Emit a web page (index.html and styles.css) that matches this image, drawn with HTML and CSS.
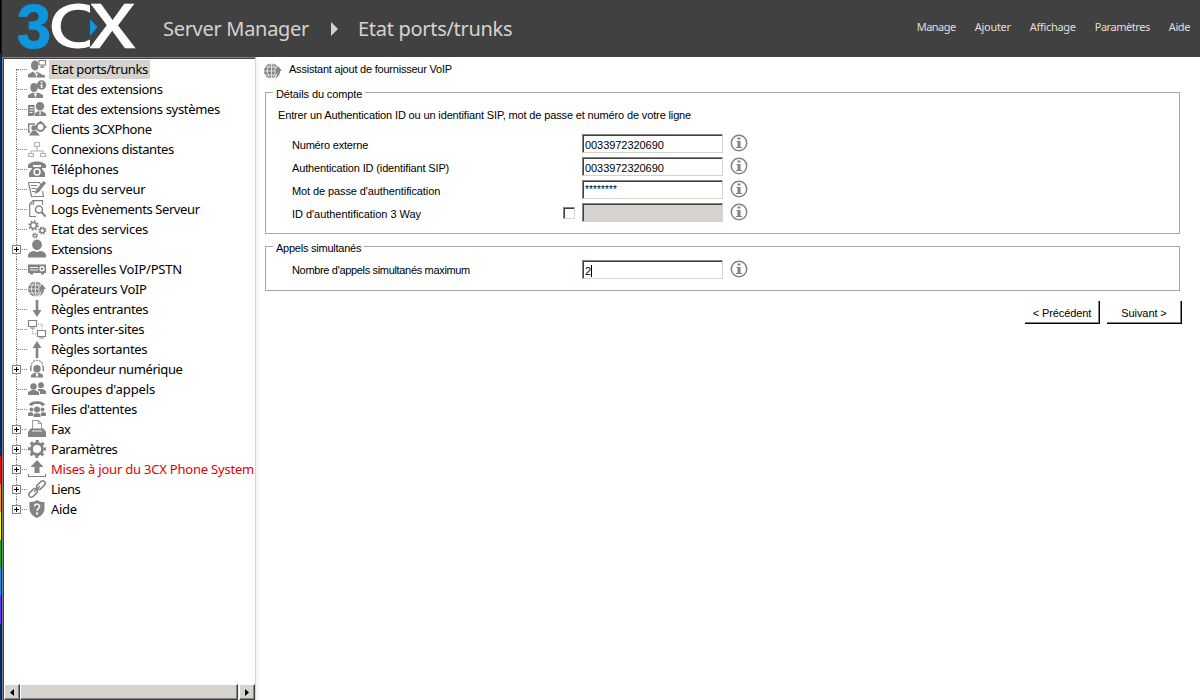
FILE: index.html
```html
<!DOCTYPE html>
<html lang="fr">
<head>
<meta charset="utf-8">
<title>3CX Server Manager</title>
<link rel="stylesheet" href="styles.css">
</head>
<body>
<div class="desktop-edge"><i class="red"></i><i class="orange"></i><i class="yellow"></i><i class="green"></i><i class="blue"></i><i class="violet"></i></div>
<div class="window">
<header class="header">
  <svg class="logo" width="120" height="48" viewBox="0 0 120 48">
    <clipPath id="c-edge"><path d="M30-5h42v60H30z"/></clipPath>
    <text class="logo-3" transform="translate(-1 45) scale(1 1.02)" textLength="34" lengthAdjust="spacingAndGlyphs">3</text>
    <g clip-path="url(#c-edge)"><text class="logo-c" transform="translate(30.500 45)" textLength="50" lengthAdjust="spacingAndGlyphs">C</text></g>
    <text class="logo-x" transform="translate(72 45)" textLength="45" lengthAdjust="spacingAndGlyphs">X</text>
    <path fill="#0e96dc" d="M72 16l7.500 8-7.500 9z"/>
  </svg>
  <span class="crumb crumb-a">Server Manager</span>
  <svg class="crumb-arrow" width="8" height="14"><path fill="#d6d3ce" d="M0 0l7 7-7 7z"/></svg>
  <span class="crumb crumb-b">Etat ports/trunks</span>
  <nav class="menu"><span class="m1">Manage</span><span class="m2">Ajouter</span><span class="m3">Affichage</span><span class="m4">Paramètres</span><span class="m5">Aide</span></nav>
</header>
<div class="body">
<aside class="sidebar">
<ul class="tree">
<li><svg class="ic" viewBox="0 0 18 18"><ellipse cx="7" cy="5.500" rx="4" ry="5"/><path d="M0 17.500v-3l5-3 2 2 2-2 5 3 3 1v2z"/><path class="w" d="M7 12.500l1.500 5 1.500-5-1.500 1z"/><path class="w" d="M10 0h8v7h-8z"/><path class="s" d="M11 .5h6.500v4.500H11zM14.300 5v2M12 7.200h4.500"/></svg><span class="t tight sel">Etat ports/trunks</span></li>
<li><svg class="ic" viewBox="0 0 18 18"><ellipse cx="6" cy="7.500" rx="3.700" ry="4.500"/><path d="M0 18v-3l5-2.500 2 1 3-1 5 2.500v3z"/><path class="w" d="M6 13.500L7.500 18 9 13.500z"/><circle cx="13.500" cy="5" r="4.700"/><path class="w" d="M12.700 1.800h1.700v1.500h-1.700zM12.700 4.300h1.700V8h-1.700z"/></svg><span class="t">Etat des extensions</span></li>
<li><svg class="ic" viewBox="0 0 18 18"><path d="M0 5h6.500v9L5 16H0z"/><path class="ws" d="M1.500 7.500h4M1.500 10h4M1.500 12.500h3"/><circle cx="12" cy="6.300" r="4.200"/><path d="M6.500 16v-2.500l4-2.500 1.500 1 1.500-1 4.500 2.500V16z"/><path class="w" d="M11 12.500l1 3.500 1-3.500z"/></svg><span class="t">Etat des extensions systèmes</span></li>
<li><svg class="ic" viewBox="0 0 18 18"><path class="s k" d="M7 4H.7v8H2"/><circle cx="6" cy="8" r="2.700"/><path d="M1 15.500l3-4.500h4l4 4.500z"/><circle class="w" cx="12.500" cy="7" r="5"/><circle class="s thick" cx="12.500" cy="7" r="3.900"/><path d="M11.500 1h2v2h-2zM16.500 6h2v2h-2zM7 6h2v2H7z"/></svg><span class="t tight">Clients 3CXPhone</span></li>
<li><svg class="ic light" viewBox="0 0 18 18"><path class="s" d="M6.500 2.500h5v4h-5zM9 7v4M3 13v-2h12v2M.5 13.500h5v3h-5zM12.500 13.500h5v3h-5z"/></svg><span class="t tight">Connexions distantes</span></li>
<li><svg class="ic" viewBox="0 0 18 18"><path d="M0 6C0 0 18 0 18 6v2h-5V5H5v3H0zM5 7h8l4 6v4H1v-4z"/><circle class="w" cx="9" cy="12" r="3.700"/><circle cx="9" cy="12" r="2.200"/></svg><span class="t loose">Téléphones</span></li>
<li><svg class="ic" viewBox="0 0 18 18"><path class="s" d="M.5 2.500h11L13 5M.5 2.500l3 14h12L14.500 11M3 5.500h6M3.500 8.500h5M4 11.500h3"/><path d="M15.500 1l2.500 2-7 9-4.500 2L8 10z"/></svg><span class="t loose">Logs du serveur</span></li>
<li><svg class="ic" viewBox="0 0 18 18"><path class="s" d="M14.500 5V.7H5L1.700 4v12.500H8M5.500 .5V4H2"/><circle class="s k" cx="11" cy="9.500" r="3.500"/><path class="s thick" d="M13.500 12l4 4.500"/></svg><span class="t tight">Logs Evènements Serveur</span></li>
<li><svg class="ic" viewBox="0 0 18 18"><circle class="s k" cx="5.500" cy="5.500" r="3"/><circle class="s thick" cx="5.500" cy="5.500" r="4.300" stroke-dasharray="1.600 1.777"/><circle class="s k" cx="14.300" cy="10.500" r="2.300"/><circle class="s" cx="14.300" cy="10.500" r="3.500" stroke-dasharray="1.500 1.249"/><circle class="s" cx="7" cy="15.500" r="1.500"/><circle class="s" cx="7" cy="15.500" r="2.500" stroke-dasharray="1 .963"/></svg><span class="t loose">Etat des services</span></li>
<li class="plus"><svg class="ic" viewBox="0 0 18 18"><ellipse cx="9" cy="4.800" rx="4.900" ry="5.200"/><path d="M0 17.500V15c1-3 4-4 6-4l3 1 3-1c3 0 5 1 6 4v2.500z"/></svg><span class="t tighter">Extensions</span></li>
<li><svg class="ic" viewBox="0 0 18 18"><path d="M0 4.500h18V13H0zM2 13h3v1.500H2zM13 13h3v1.500h-3z"/><path class="ws" d="M2 7.500h8M2 10h8"/><circle class="w" cx="14" cy="8.700" r="2.600"/><circle cx="14" cy="8.700" r="1.300"/></svg><span class="t loose">Passerelles VoIP/PSTN</span></li>
<li><svg class="ic" viewBox="0 0 18 18"><g id="globe"><circle cx="7.500" cy="9" r="7.500"/><path class="ws grid" d="M7.500 1v16M0 9h11M1 5h12M1 13h12M7.500 1C2 6 2 12 7.500 17M7.500 1c5 5 5 11 0 16"/><path class="w" d="M14 3l4 6h-1.500c0 4-3 7-6 8l-1-1c3-2 4-4 3.500-7H10z"/><path d="M14 4l4 5h-2c0 4-2 6-5 7.500 2-2.500 3-4.500 2-7.500h-2.500z"/></g></svg><span class="t">Opérateurs VoIP</span></li>
<li><svg class="ic" viewBox="0 0 18 18"><path d="M7.700 0h2.600v10H13.500L9 17l-4.500-7h3.200z"/></svg><span class="t">Règles entrantes</span></li>
<li><svg class="ic" viewBox="0 0 18 18"><path class="s" d="M.5.500h8v6h-8zM2 8h5M9.500 10.500h8v6h-8zM11 18h5"/><path class="s" stroke-dasharray="1 1.500" d="M10 4h4v5M4.500 9v5H8"/></svg><span class="t">Ponts inter-sites</span></li>
<li><svg class="ic" viewBox="0 0 18 18"><path d="M7.700 18h2.600V8h3.200L9 1 4.500 8h3.200z"/></svg><span class="t">Règles sortantes</span></li>
<li class="plus"><svg class="ic" viewBox="0 0 18 18"><circle cx="9" cy="8.700" r="3.700"/><path d="M3 17.500V15l4-2.500 2 1.500 2-1.500 4 2.500v2.500z"/><path class="w" d="M7.500 14L9 17.500l1.500-3.500z"/><path class="s" stroke-dasharray="2 1" d="M3 7c0-9 12-9 12 0"/><path d="M2 7h1.500v4H2zM14.500 7H16v4h-1.500z"/></svg><span class="t tight">Répondeur numérique</span></li>
<li><svg class="ic" viewBox="0 0 18 18"><circle cx="5.500" cy="6.500" r="3.200"/><circle cx="13" cy="5.200" r="2.900"/><path d="M0 15v-3l4-2h3l4 2v3zM10 9h5l3 2v3h-6v-2.500l-2-1z"/></svg><span class="t looser">Groupes d'appels</span></li>
<li><svg class="ic" viewBox="0 0 18 18"><path d="M1 5C2 0 16 0 17 5l-3 1-2-2H6L4 6z"/><circle cx="3.500" cy="9.500" r="2"/><circle cx="14.500" cy="9.500" r="2"/><circle cx="9" cy="9.500" r="3"/><path d="M0 16v-3l3-1 2 1v3zM13 16v-3l2-1 3 1v3zM5.500 17v-3l3.500-1 3.500 1v3z"/></svg><span class="t">Files d'attentes</span></li>
<li class="plus"><svg class="ic" viewBox="0 0 18 18"><path class="s thin" d="M4.500 9V.5h6l3 3V9M10.500.500v3h3"/><path d="M2.500 8.500h13L18 12v5H0v-5z"/><path class="ws" d="M4 11h10"/></svg><span class="t tighter">Fax</span></li>
<li class="plus"><svg class="ic" viewBox="0 0 18 18"><circle class="s gear" cx="9" cy="9" r="5.500"/><circle class="s teeth" cx="9" cy="9" r="7.700" stroke-dasharray="3 3.048" transform="rotate(-11 9 9)"/></svg><span class="t tight">Paramètres</span></li>
<li class="plus"><svg class="ic" viewBox="0 0 18 18"><path d="M9 0l6.500 7H11.500v6h-5V7H2.500z"/><path class="s" d="M.5 14v2.500h17V14"/></svg><span class="t red-text">Mises à jour du 3CX Phone System</span></li>
<li class="plus"><svg class="ic" viewBox="0 0 18 18"><g class="s k" transform="rotate(-45 9 9)"><rect x="-1.500" y="6.500" width="10" height="5" rx="2.500"/><rect x="9.500" y="6.500" width="10" height="5" rx="2.500"/><path d="M5 9h8"/></g></svg><span class="t tighter">Liens</span></li>
<li class="plus"><svg class="ic" viewBox="0 0 18 18"><path d="M9 0c3 2 5 2 7.500 2v6c0 5-3 8-7.500 10C4.500 16 1.500 13 1.500 8V2C4 2 6 2 9 0z"/><path class="ws k" d="M6.500 6.500C6.500 3 12 3.500 11.500 7 11 8.500 9 8.500 9 11"/><path class="w" d="M8 12.500h2v2H8z"/></svg><span class="t">Aide</span></li>
</ul>
<div class="scrollbar"><span class="btn3d"><svg width="5" height="7"><path d="M4 0v7L0 3.500z"/></svg></span><span class="btn3d thumb"></span><span class="btn3d right"><svg width="5" height="7"><path d="M0 0v7l4-3.500z"/></svg></span></div>
</aside>
<main class="main">
  <div class="title"><svg class="ic" viewBox="0 0 18 18"><use href="#globe"/></svg><span class="title-text">Assistant ajout de fournisseur VoIP</span></div>
  <section class="group account"><h2 class="legend l1">Détails du compte</h2>
    <p class="intro">Entrer un Authentication ID ou un identifiant SIP, mot de passe et numéro de votre ligne</p>
    <div class="row"><label class="f1">Numéro externe</label><span class="input">0033972320690</span><svg class="info" viewBox="0 0 18 18"><circle cx="9" cy="9" r="7.700"/><path d="M7.500 3.500h3v2h-3zM6.500 7h4v6H12v1H6v-1h1.500V8h-1z"/></svg></div>
    <div class="row"><label class="f2">Authentication ID (identifiant SIP)</label><span class="input">0033972320690</span><svg class="info" viewBox="0 0 18 18"><circle cx="9" cy="9" r="7.700"/><path d="M7.500 3.500h3v2h-3zM6.500 7h4v6H12v1H6v-1h1.500V8h-1z"/></svg></div>
    <div class="row"><label class="f3">Mot de passe d'authentification</label><span class="input pass">********</span><svg class="info" viewBox="0 0 18 18"><circle cx="9" cy="9" r="7.700"/><path d="M7.500 3.500h3v2h-3zM6.500 7h4v6H12v1H6v-1h1.500V8h-1z"/></svg></div>
    <div class="row"><label class="f4">ID d'authentification 3 Way</label><span class="check"></span><span class="input disabled"></span><svg class="info" viewBox="0 0 18 18"><circle cx="9" cy="9" r="7.700"/><path d="M7.500 3.500h3v2h-3zM6.500 7h4v6H12v1H6v-1h1.500V8h-1z"/></svg></div>
  </section>
  <section class="group calls"><h2 class="legend l2">Appels simultanés</h2>
    <div class="row"><label class="f5">Nombre d'appels simultanés maximum</label><span class="input">2<i class="caret"></i></span><svg class="info" viewBox="0 0 18 18"><circle cx="9" cy="9" r="7.700"/><path d="M7.500 3.500h3v2h-3zM6.500 7h4v6H12v1H6v-1h1.500V8h-1z"/></svg></div>
  </section>
  <div class="actions"><span class="button">&lt; Précédent</span><span class="button">Suivant &gt;</span></div>
</main>
</div>
</div>
</body>
</html>
```
FILE: styles.css
```css
*, *::before, *::after { box-sizing: border-box; }
body { margin: 0; width: 1200px; height: 700px; overflow: hidden; display: flex; background: #fff; font-family: "Liberation Sans", sans-serif; font-size: 11px; color: #000; }
.desktop-edge { width: 2px; height: 700px; flex: none; padding-top: 456px; background: linear-gradient(#000 53px, #003063 53px); display: flex; flex-direction: column; border-right: 1px solid #181818; }
.desktop-edge i { height: 28px; }
.red { background: #f00; }
.orange { background: #ff9a00; }
.yellow { background: #ff0; }
.green { background: #00b400; }
.blue { background: #009aff; }
.violet { background: #63f; }
.window { flex: 1; display: flex; flex-direction: column; }
.header { height: 57px; flex: none; background: #424142; display: flex; align-items: flex-start; }
.logo { margin: 3px 0 0 16px; flex: none; overflow: visible; }
.logo-3 { font: bold 62px "Liberation Sans", sans-serif; fill: #0e96dc; stroke: #0e96dc; stroke-width: 1; }
.logo-c { font: 600 61px Lato, sans-serif; fill: #fff; }
.logo-x { font: 600 62px "Open Sans", sans-serif; fill: #fff; stroke: #fff; stroke-width: .6; }
.crumb { font: 20px/28px "Noto Sans", sans-serif; letter-spacing: -.3px; color: #d6d3ce; margin-top: 15px; white-space: nowrap; }
.crumb-a { width: 168px; margin-left: 25px; }
.crumb-b { margin-left: 19px; }
.crumb-arrow { margin-top: 22px; }
.menu { margin-left: auto; padding: 19px 10px 0 0; display: flex; gap: 19px; font: 11px/16px "Noto Sans", sans-serif; color: #e0deda; }
.m1 { letter-spacing: -.5px; }
.m2 { letter-spacing: -.3px; }
.m3 { letter-spacing: -.3px; }
.m4 { letter-spacing: -.45px; }
.m5 { letter-spacing: -.4px; }
.body { flex: 1; display: flex; min-height: 0; }
.sidebar { width: 254px; flex: none; border: solid; border-width: 1px 1px 0 1px; border-color: #848284 #d6d3ce #fff #848284; display: flex; flex-direction: column; background: #fff; overflow: hidden; box-shadow: inset 1px 1px #424142; padding: 1px 0 0 1px; }
.tree { list-style: none; margin: 0; padding: 0; flex: 1; }
.tree li { height: 20px; display: flex; align-items: center; padding-left: 24px; position: relative; }
.tree li::before { content: ""; position: absolute; left: 12px; top: 0; height: 20px; border-left: 1px dotted #848284; }
.tree li:first-child::before { top: 10px; height: 10px; }
.tree li:last-child::before { height: 10px; }
.tree li::after { content: ""; position: absolute; left: 13px; top: 10px; width: 10px; border-top: 1px dotted #848284; }
.tree .plus { background: repeating-linear-gradient(90deg, #848284 0 1px, #fff 1px 2px) 18px 10px/5px 1px no-repeat; }
.tree .plus::after { left: 8px; top: 6px; width: 9px; height: 9px; border: 1px solid #848284; background: linear-gradient(#000, #000) center/5px 1px no-repeat, linear-gradient(#000, #000) center/1px 5px no-repeat, #fff; }
.ic { width: 18px; height: 18px; flex: none; fill: #848284; overflow: visible; }
.w { fill: #fff; }
.s { fill: none; stroke: #848284; stroke-width: 1.2; }
.ws { fill: none; stroke: #fff; stroke-width: .9; }
.grid { stroke-width: .7; }
.thin { stroke-width: .8; }
.k { stroke-width: 1.5; }
.thick { stroke-width: 2; }
.gear { stroke-width: 2.8; }
.teeth { stroke-width: 2.6; }
.light { opacity: .6; }
.t { font: 13px/19px "Noto Sans", sans-serif; letter-spacing: -.33px; margin-left: 3px; padding: 0 2px; white-space: nowrap; }
.tight { letter-spacing: -.4px; }
.tighter { letter-spacing: -.5px; }
.loose { letter-spacing: -.23px; }
.looser { letter-spacing: -.12px; }
.sel { background: #d6d3ce; }
.red-text { color: #e00000; letter-spacing: -.21px; }
.scrollbar { height: 16px; display: flex; background: #eeece8; }
.btn3d { width: 16px; height: 16px; background: #d6d3ce; border: 1px solid; border-color: #fff #424142 #424142 #fff; box-shadow: inset -1px -1px #848284; display: flex; align-items: center; justify-content: center; }
.thumb { width: 218px; }
.right { margin-left: 1px; }
.main { flex: 1; border-left: 3px solid #f7f7f7; padding: 4px 18px 0 6px; }
.title { height: 31px; display: flex; }
.title .ic { margin: 1px 0 0 -1px; }
.title-text { margin-left: 7px; line-height: 16px; letter-spacing: -.22px; white-space: nowrap; }
.group { width: 915px; border: 1px solid #a5a6a5; }
.legend { font: inherit; margin: -8px 0 0 7px; width: max-content; padding: 0 3px; background: #fff; line-height: 18px; height: 16px; white-space: nowrap; }
.l1 { letter-spacing: -.1px; }
.l2 { letter-spacing: -.24px; }
.account { height: 142px; }
.intro { margin: 8px 0 12px 12px; line-height: 13px; letter-spacing: -.14px; white-space: nowrap; }
.row { height: 23px; padding-left: 26px; display: flex; }
.row label { flex: 1; line-height: 22px; white-space: nowrap; }
.f1 { letter-spacing: -.2px; }
.f2 { letter-spacing: -.14px; }
.f3 { letter-spacing: -.1px; }
.f4 { letter-spacing: -.04px; }
.f5 { letter-spacing: -.33px; }
.input { width: 141px; height: 19px; flex: none; border: 1px solid; border-color: #848284 #d6d3ce #d6d3ce #848284; box-shadow: inset 1px 1px #424142; padding: 3px 0 0 2px; letter-spacing: -.06px; line-height: 17px; display: flex; align-items: center; }
.info { width: 18px; height: 18px; margin: 0 431px 0 7px; fill: #848284; flex: none; }
.info circle { fill: none; stroke: #848284; stroke-width: 1.500; }
.pass { font-size: 10px; line-height: 14px; padding-top: 0; letter-spacing: .12px; }
.disabled { background: #d6d3ce; }
.check { width: 12px; height: 12px; margin: 4px 7px 0 0; border: 1px solid; border-color: #848284 #d6d3ce #d6d3ce #848284; box-shadow: inset 1px 1px #424142; }
.caret { width: 1px; height: 12px; background: #000; }
.calls { margin-top: 12px; height: 45px; }
.calls .row { margin-top: 5px; }
.calls .row label { line-height: 21px; }
.actions { margin-top: 10px; display: flex; justify-content: flex-end; gap: 7px; }
.button { width: 75px; height: 23px; text-align: center; line-height: 24px; letter-spacing: -.1px; border-right: 1px solid #000; border-bottom: 1px solid #000; box-shadow: inset -1px -1px #848284; }
```
